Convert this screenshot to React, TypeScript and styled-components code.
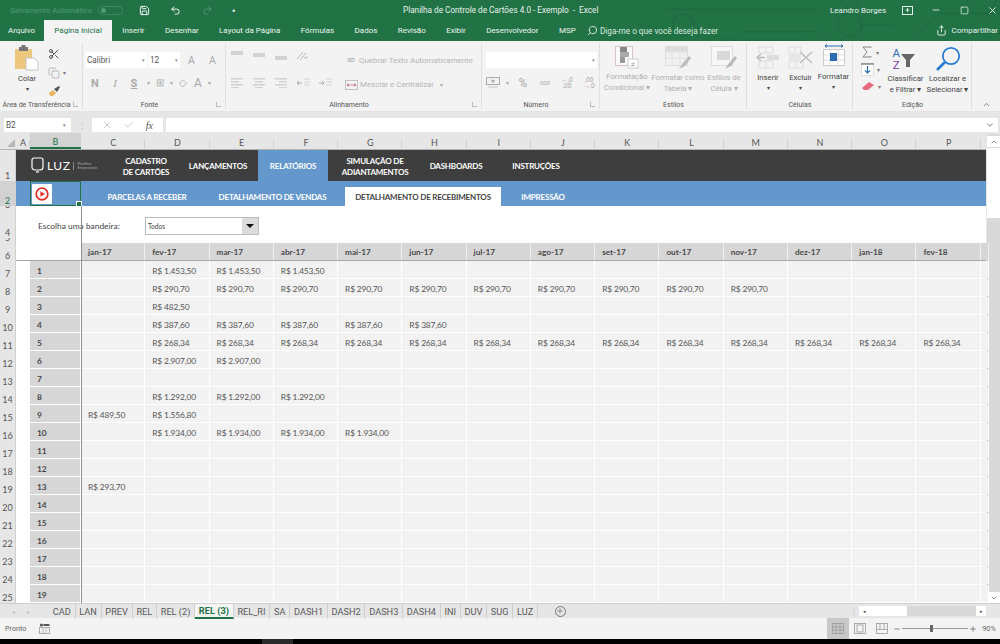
import React from "react";
import styled, { createGlobalStyle } from "styled-components";
import { Scissors, Save, Undo2, Redo2, Search, Share, ChevronDown, ChevronUp, X, Check, Minus, Plus, Square, Copy } from "lucide-react";

const Global = createGlobalStyle`
  html, body { margin: 0; padding: 0; background: #000; }
  * { box-sizing: border-box; }
`;

const Page = styled.div`
  width: 1000px; height: 644px; overflow: hidden; display: flex; flex-direction: column;
  font-family: Roboto, "Liberation Sans", sans-serif; background: #f3f3f3; color: #444;
`;

/* ---------- green header ---------- */
const GreenHeader = styled.header`
  position: relative; height: 41px; flex: none; background: #217346; color: #fff; font-size: 8px;
`;
const Circuit = styled.svg`
  position: absolute; right: 0; top: 0; width: 340px; height: 41px; pointer-events: none;
`;
const TitleBar = styled.div`
  position: relative; height: 20px; display: flex; align-items: center; padding-left: 10px;
`;
const AutoSave = styled.span`
  width: 85px; color: #4f9c73; font-size: 7.7px; white-space: nowrap;
`;
const Toggle = styled.span`
  width: 25px; height: 9px; margin-left: 3px; border: 1px solid #3d8a62; border-radius: 5px; display: flex; align-items: center; padding-left: 2px;
  &::before { content: ""; width: 5px; height: 5px; border-radius: 50%; background: #4f9c73; }
`;
const QuickBtn = styled.span<{ $w: number; $dim?: boolean }>`
  width: ${p => p.$w}px; display: flex; justify-content: center; align-items: center; color: ${p => (p.$dim ? "#4f9c73" : "#fff")};
`;
const DocTitle = styled.span`
  position: absolute; left: 403px; top: 5px; font-size: 8.2px; color: #e6f0ea; white-space: pre;
`;
const TitleRight = styled.div`
  margin-left: auto; margin-right: -7px; display: flex; align-items: center; color: #e6f0ea;
`;
const UserName = styled.span`
  width: 63px; font-size: 8px; white-space: nowrap;
`;
const WinBtn = styled.span`
  width: 28.5px; display: flex; justify-content: center; align-items: center;
`;
const TabsRow = styled.nav`
  position: relative; height: 21px; display: flex; align-items: flex-end; padding-left: 8px;
`;
const RibbonTab = styled.span<{ $on?: boolean }>`
  height: 21px; display: flex; align-items: center; white-space: nowrap; font-size: 8px; padding: 0 10.2px;
  color: ${p => (p.$on ? "#217346" : "#edf4f0")}; background: ${p => (p.$on ? "#f3f3f3" : "transparent")};
`;
const FirstTab = styled(RibbonTab)`
  padding: 0; margin-right: 9px;
`;
const TellMe = styled.span`
  margin-left: 1px; height: 21px; display: flex; align-items: center; gap: 2px; color: #d9e8df; font-size: 8.2px; white-space: nowrap;
  svg { transform: scaleX(-1); }
`;
const ShareBtn = styled.span`
  position: absolute; right: 2px; top: 0; height: 21px; display: flex; align-items: center; gap: 4px; color: #e6f0ea; font-size: 8px;
`;

/* ---------- ribbon ---------- */
const Ribbon = styled.section`
  height: 71px; flex: none; display: flex; background: #f3f3f3; border-bottom: 1px solid #e4e4e4;
`;
const Group = styled.div<{ $w: number }>`
  width: ${p => p.$w}px; flex: none; display: flex; flex-direction: column; position: relative;
  &::after { content: ""; position: absolute; right: 0; top: 2px; bottom: 2px; width: 1px; background: #e0e0e0; }
`;
const GroupBody = styled.div<{ $pl?: number }>`
  flex: 1; display: flex; padding-left: ${p => p.$pl ?? 0}px; min-height: 0;
`;
const GroupLabel = styled.div<{ $launcher?: boolean }>`
  height: 12px; flex: none; font-size: 7px; line-height: 13px; color: #555; text-align: center; white-space: nowrap; position: relative;
  padding-right: ${p => (p.$launcher ? 10 : 0)}px;
`;
const Launcher = styled.span`
  position: absolute; right: 5px; top: 3px; width: 5px; height: 5px; border-left: 1px solid #bbb; border-bottom: 1px solid #bbb;
`;
const BigBtn = styled.div<{ $w: number; $dim?: boolean; $mt?: number }>`
  width: ${p => p.$w}px; flex: none; display: flex; flex-direction: column; align-items: center; padding-top: ${p => p.$mt ?? 5}px;
  font-size: 7.7px; line-height: 11px; color: ${p => (p.$dim ? "#b0b0b0" : "#444")}; text-align: center; white-space: nowrap;
  svg { flex: none; margin-bottom: 2px; }
`;
const SortIcon = styled.div`
  width: 30px; height: 25px; margin-bottom: 2px; flex: none; display: flex; align-items: center; gap: 1px; padding-left: 2px;
  svg { margin: 4px 0 0 0; }
`;
const SortLetters = styled.div`
  display: flex; flex-direction: column; font-size: 11.5px; line-height: 12px; text-align: center;
`;
const SortA = styled.span`
  color: #2b6cb0;
`;
const SortZ = styled.span`
  color: #7b3fa8;
`;
const Caret = styled.span`
  font-size: 6px; line-height: 10px; color: inherit;
`;
const SmallCol = styled.div`
  width: 26px; margin-left: 7px; display: flex; flex-direction: column; align-items: flex-start; gap: 3px; padding-top: 5px; color: #666;
`;
const SmallIcon = styled.div`
  height: 16px; display: flex; align-items: center; gap: 3px; font-size: 6px; color: #777;
`;
const FontCol = styled.div`
  display: flex; flex-direction: column; padding: 11px 0 0 2px;
`;
const FontRow = styled.div`
  display: flex; align-items: center; height: 16px;
`;
const FontTools = styled(FontRow)`
  margin-top: 7px;
`;
const Combo = styled.div<{ $w: number }>`
  width: ${p => p.$w}px; height: 16px; background: #fff; margin-right: 1px; display: flex; align-items: center; padding: 0 2px; font-size: 8.2px; color: #555;
  span:last-child { margin-left: auto; font-size: 5px; color: #888; }
`;
const GrowA = styled.span`
  width: 21px; text-align: center; font-size: 10.5px; color: #aaa; position: relative;
`;
const Dimmed = styled.span<{ $w: number; $fs?: number; $b?: boolean; $i?: boolean; $u?: boolean; $serif?: boolean }>`
  width: ${p => p.$w}px; flex: none; text-align: center; color: #aaa; font-size: ${p => p.$fs ?? 11}px; line-height: 1;
  font-weight: ${p => (p.$b ? 700 : 400)}; font-style: ${p => (p.$i ? "italic" : "normal")}; text-decoration: ${p => (p.$u ? "underline" : "none")};
  font-family: ${p => (p.$serif ? '"Liberation Serif", serif' : "inherit")};
`;
const AlignGrid = styled.div`
  width: 119px; display: grid; grid-template-columns: repeat(5, 22px); grid-template-rows: 28px 28px; align-items: center; justify-items: center; flex: none;
`;
const AlignText = styled.div`
  display: flex; flex-direction: column; padding-top: 11px; gap: 7px;
`;
const AlignLine = styled.div`
  display: flex; align-items: center; gap: 2px; height: 17px; color: #b4b4b4; font-size: 7.9px; white-space: nowrap;
`;
const NumRow = styled.div`
  display: flex; align-items: center; height: 16px; margin-top: 7px; color: #aaa;
`;
const NumCol = styled.div`
  display: flex; flex-direction: column; padding: 11px 0 0 4px;
`;
const SumCol = styled.div`
  width: 32px; flex: none; display: flex; flex-direction: column; padding: 3px 0 0 8px; gap: 1px; font-size: 6px; color: #777;
`;
const CollapseCell = styled.div`
  flex: 1; display: flex; align-items: flex-end; justify-content: center; padding-bottom: 2px; color: #666;
`;

/* ---------- formula bar ---------- */
const FormulaBar = styled.div`
  height: 21px; flex: none; background: #e6e6e6; display: flex; align-items: center; padding: 5px 2px 0 4px;
`;
const NameBox = styled.div`
  width: 67px; height: 14px; background: #fff; font-size: 8.2px; color: #555; padding: 0 2px; display: flex; align-items: center; justify-content: space-between;
  span:last-child { font-size: 5px; color: #777; margin-right: 3px; }
`;
const Grip = styled.div`
  width: 21px; display: flex; justify-content: center; color: #bbb; font-size: 8px;
`;
const FxBox = styled.div`
  width: 71px; height: 14px; background: #fff; display: flex; align-items: center; justify-content: space-around; padding: 0 4px; color: #bbb; margin-right: 3px;
`;
const Fx = styled.span`
  font-family: "Liberation Serif", serif; font-style: italic; font-size: 10px; color: #555;
`;
const FormulaInput = styled.div`
  flex: 1; height: 14px; background: #fff; display: flex; align-items: center; justify-content: flex-end; padding-right: 3px; color: #666;
`;

/* ---------- sheet ---------- */
const ColHeaderRow = styled.div`
  height: 17px; flex: none; display: flex; background: #e6e6e6; font-family: Lato, sans-serif; font-size: 9px; color: #555; border-bottom: 1px solid #b5b5b5;
`;
const Corner = styled.div`
  width: 16px; flex: none; display: flex; align-items: flex-end; justify-content: flex-end; padding: 0 1px 2px 0;
  &::before { content: ""; width: 0; height: 0; border-style: solid; border-width: 0 0 8px 8px; border-color: transparent transparent #b8b8b8 transparent; }
`;
const ColLabel = styled.div<{ $w: number; $on?: boolean }>`
  width: ${p => p.$w}px; flex: none; display: flex; align-items: center; justify-content: center; padding-top: 2px; position: relative;
  background: ${p => (p.$on ? "#d2d2d2" : "transparent")}; color: ${p => (p.$on ? "#217346" : "#555")};
  border-bottom: ${p => (p.$on ? "2px solid #217346" : "none")};
  &::after { content: ""; position: absolute; right: 0; bottom: 1px; height: 8px; width: 1px; background: #cfcfcf; }
`;
const SheetArea = styled.div`
  height: 453px; flex: none; display: flex; background: #fff;
`;
const RowHeaders = styled.div`
  width: 16px; flex: none; background: #e6e6e6; display: flex; flex-direction: column; border-right: 1px solid #d0d0d0;
`;
const RowNum = styled.div<{ $h: number; $on?: boolean }>`
  height: ${p => p.$h}px; overflow: hidden; display: flex; align-items: flex-end; justify-content: center; flex: none;
  font-family: Lato, sans-serif; font-size: 9px; line-height: 11px; color: ${p => (p.$on ? "#217346" : "#555")};
  background: ${p => (p.$on ? "#d2d2d2" : "transparent")};
`;
const Content = styled.div`
  width: 970px; flex: none; position: relative; display: flex; flex-direction: column; font-family: Lato, sans-serif;
`;
const MainNav = styled.div`
  height: 31px; flex: none; background: #3e3e3e; display: flex; color: #fff; font-weight: 700; font-size: 8px; letter-spacing: -.2px; line-height: 11px; text-align: center;
`;
const Logo = styled.div`
  width: 92px; flex: none; display: flex; align-items: center; padding-left: 15px; font-weight: 400; letter-spacing: 0;
`;
const LogoWord = styled.span`
  font-size: 12px; letter-spacing: .5px; margin-left: 3px; font-weight: 400;
`;
const LogoTag = styled.span`
  font-size: 3.6px; line-height: 4px; color: #aaa; margin-left: 3px; padding-left: 3px; border-left: 1px solid #888; text-align: left;
`;
const NavItem = styled.div<{ $w: number; $on?: boolean; $ml?: number }>`
  width: ${p => p.$w}px; flex: none; display: flex; align-items: center; justify-content: center; padding-top: 2px; margin-left: ${p => p.$ml ?? 0}px; white-space: nowrap;
  background: ${p => (p.$on ? "#6497cb" : "transparent")};
`;
const SubNav = styled.div`
  height: 25px; flex: none; background: #6497cb; display: flex; padding-left: 65px; color: #fff; font-weight: 700; font-size: 8px; letter-spacing: -.2px;
`;
const SubItem = styled.div<{ $w: number }>`
  width: ${p => p.$w}px; flex: none; display: flex; align-items: center; justify-content: center; padding-top: 6px; white-space: nowrap;
`;
const SubActive = styled.div`
  width: 156px; margin: 6px 0 0 13px; flex: none; background: #fff; color: #444; display: flex; align-items: center; justify-content: center; white-space: nowrap;
`;
const Selection = styled.div`
  position: absolute; left: 14px; top: 31px; width: 51px; height: 25px; border: 1px solid #217346; display: flex; align-items: center; padding-left: 1px;
  &::after { content: ""; position: absolute; right: -2px; bottom: -2px; width: 4px; height: 4px; background: #217346; border: 1px solid #fff; }
`;
const PlayBtn = styled.div`
  width: 20px; height: 20px; background: #fff; border-radius: 1px; display: flex; align-items: center; justify-content: center;
`;
const FilterRow = styled.div`
  height: 37px; flex: none; display: flex; align-items: center; padding: 2px 0 0 22px; font-size: 8.4px; color: #444;
`;
const FilterLabel = styled.span`
  width: 107px; flex: none; white-space: nowrap;
`;
const Select = styled.div`
  width: 114px; height: 18px; border: 1px solid #bbb; background: #fff; display: flex; align-items: center; padding-left: 2px; font-size: 6.6px; color: #444;
`;
const SelectArrow = styled.span`
  margin-left: auto; width: 16px; height: 16px; background: #dcdcdc; display: flex; align-items: center; justify-content: center;
  &::before { content: ""; border-style: solid; border-width: 4px 4.5px 0 4.5px; border-color: #111 transparent transparent transparent; }
`;
const columns = "14px 51px repeat(14, 64.28px) 1fr";
const MonthRow = styled.div`
  height: 18px; flex: none; display: grid; grid-template-columns: ${columns}; border-bottom: 1px solid #a8a8a8;
`;
const MonthCell = styled.div<{ $blank?: boolean }>`
  background: ${p => (p.$blank ? "#fff" : "#d6d6d6")}; border-right: 1px solid ${p => (p.$blank ? "#fff" : "#efefef")}; padding: 1px 0 0 7px; display: flex; align-items: center;
  font-size: 8.2px; font-weight: 700; color: #4a4a4a; white-space: nowrap;
`;
const DataRow = styled.div`
  height: 18px; flex: none; display: grid; grid-template-columns: ${columns}; border-bottom: 1px solid #fff;
`;
const Cell = styled.div`
  background: #f2f2f2; border-right: 1px solid #fff; padding: 2px 0 0 7px; display: flex; align-items: center; font-size: 8.4px; letter-spacing: -.15px; color: #555; white-space: nowrap;
`;
const ColACell = styled.div`
  background: #fff;
`;
const IdCell = styled(Cell)`
  background: #d6d6d6; font-weight: 700; color: #4a4a4a; letter-spacing: 0;
`;
const FreezeLine = styled.div`
  position: absolute; left: 64.5px; top: 56px; bottom: 0; width: 1px; background: #8f8f8f;
`;
const VScroll = styled.div`
  width: 14px; flex: none; background: #d9d9d9; display: flex; flex-direction: column; margin-top: -16px; border-left: 1px solid #e6e6e6; height: 469px;
`;
const VBtn = styled.div`
  height: 11px; margin-top: 2px; background: #fff; display: flex; align-items: center; justify-content: center; color: #555; flex: none;
`;
const VThumb = styled.div`
  height: 70px; background: #fff; margin-top: 1px; flex: none;
`;
const VFill = styled.div`
  flex: 1;
`;

/* ---------- sheet tabs + status ---------- */
const TabBar = styled.div`
  height: 15px; flex: none; background: #e6e6e6; display: flex; align-items: center; border-top: 1px solid #d0d0d0; position: relative; z-index: 1;
`;
const TabArrows = styled.div`
  width: 49px; flex: none; display: flex; gap: 12px; padding-left: 12px; font-size: 6px; color: #c4c4c4;
`;
const SheetTab = styled.div<{ $on?: boolean }>`
  height: 15px; padding: 0 3.75px; flex: none; display: flex; align-items: center; font-size: 9.2px; white-space: nowrap;
  color: ${p => (p.$on ? "#217346" : "#5a5a5a")}; font-weight: ${p => (p.$on ? 700 : 400)};
  background: ${p => (p.$on ? "#f5f5f5" : "transparent")}; border-right: 1px solid #cfcfcf;
  border-bottom: ${p => (p.$on ? "2px solid #217346" : "none")};
`;
const AddSheet = styled.div`
  width: 11px; height: 11px; margin-left: 17px; flex: none; border: 1px solid #777; border-radius: 50%; display: flex; align-items: center; justify-content: center; color: #666;
`;
const HScroll = styled.div`
  position: absolute; left: 850px; top: 1px; width: 136px; height: 12px; display: flex; align-items: center;
`;
const HGrip = styled.span`
  width: 9px; color: #aaa; font-size: 8px; flex: none;
`;
const HBtn = styled.span`
  width: 10px; height: 10px; background: #fff; flex: none; font-size: 5px; color: #444; display: flex; align-items: center; justify-content: center;
`;
const HThumb = styled.span`
  width: 38px; height: 10px; background: #fff; flex: none;
`;
const HTrack = styled.span`
  width: 69px; height: 10px; background: #d9d9d9; flex: none;
`;
const StatusBar = styled.footer`
  height: 21px; flex: none; background: #f3f3f3; display: flex; align-items: center; font-size: 7.2px; color: #666; padding-left: 5px;
`;
const StatusGap = styled.span`
  width: 13px;
`;
const StatusRight = styled.div`
  margin-left: auto; height: 21px; display: flex; align-items: center; color: #888; gap: 1px;
`;
const ViewBtn = styled.div<{ $on?: boolean }>`
  width: 22px; height: 21px; margin-right: -1px; display: flex; align-items: center; justify-content: center; background: ${p => (p.$on ? "#c8c8c8" : "transparent")};
`;
const Zoomer = styled.div`
  width: 66px; height: 1px; background: #999; position: relative; flex: none;
  &::after { content: ""; position: absolute; left: 28px; top: -3px; width: 3px; height: 7px; background: #666; }
`;
const ZoomValue = styled.span`
  width: 22px; text-align: center; font-size: 7.4px; color: #666;
`;
const BlackBar = styled.div`
  flex: 1; background: #000; padding-left: 262px;
  &::before { content: ""; display: block; width: 31px; height: 100%; background: #2a2a2a; }
`;

/* ---------- icons ---------- */
const Clipboard = () => (
  <svg width="26" height="26" viewBox="0 0 26 26">
    <rect x="1" y="4" width="17" height="20" fill="#eec77f" />
    <rect x="5" y="2" width="9" height="4" fill="#777" />
    <rect x="7.5" y="0" width="4" height="3" fill="#777" />
    <path d="M12 13h8l4 4v8H12z" fill="#fff" stroke="#c4c4c4" />
  </svg>
);
const Brush = () => (
  <svg width="13" height="12" viewBox="0 0 13 12">
    <path d="M1 8l4-3 3 3-3 3H2z" fill="#e8b860" />
    <path d="M6 4l5-3 1 1-3 5z" fill="#555" />
  </svg>
);
const Bars = ({ kind }: { kind: string }) => {
  const c = "#d2d2d2";
  if (kind === "top" || kind === "mid" || kind === "bot") {
    const y = kind === "top" ? 1 : kind === "mid" ? 3 : 6;
    return (<svg width="14" height="11" viewBox="0 0 14 11"><rect x="1" y={y} width="12" height="4" fill={c} /></svg>);
  }
  const x = (w: number) => (kind === "left" ? 1 : kind === "center" ? (14 - w) / 2 : 13 - w);
  return (
    <svg width="14" height="10" viewBox="0 0 14 10">
      <rect x={x(12)} y="0" width="12" height="1.5" fill={c} />
      <rect x={x(8)} y="3" width="8" height="1.5" fill={c} />
      <rect x={x(12)} y="6" width="12" height="1.5" fill={c} />
      <rect x={x(8)} y="9" width="8" height="1" fill={c} />
    </svg>
  );
};
const Indent = ({ dir }: { dir: number }) => (
  <svg width="14" height="10" viewBox="0 0 14 10" fill="none" stroke="#bbb">
    <path d="M8 1h6M8 4h6M8 7h6" stroke="#d5d5d5" />
    <path d={dir < 0 ? "M6 5H1M3 3L1 5l2 2" : "M1 5h5M4 3l2 2-2 2"} stroke="#aaa" />
  </svg>
);
const Orient = () => (
  <svg width="16" height="11" viewBox="0 0 16 11" fill="none" stroke="#bbb"><path d="M2 9l6-7M5 10l6-7M9 8l4-1" /></svg>
);
const Merge = () => (
  <svg width="13" height="12" viewBox="0 0 13 12" fill="none"><rect x=".5" y="1.5" width="12" height="9" stroke="#c0c0c0" /><path d="M2 6h9M4 4.5L2 6l2 1.5M9 4.5L11 6 9 7.5" stroke="#a45" strokeWidth=".6" /></svg>
);
const Money = () => (
  <svg width="16" height="12" viewBox="0 0 16 12"><rect x=".5" y=".5" width="13" height="7" fill="none" stroke="#aaa" /><circle cx="7" cy="4" r="1.6" fill="#aaa" /><rect x="2" y="9" width="10" height="2" fill="#ddd" /></svg>
);
const CondFmt = () => (
  <svg width="24" height="23" viewBox="0 0 24 23">
    <rect x=".5" y=".5" width="17" height="19" fill="#fafafa" stroke="#d6c5c5" />
    <rect x="5" y="1" width="7" height="5" fill="#888" /><rect x="5" y="6" width="9" height="5" fill="#aaa" /><rect x="5" y="11" width="5" height="6" fill="#999" />
    <rect x="13" y="13" width="10" height="9" fill="#fff" stroke="#ccc" />
    <text x="15.5" y="21" fontSize="8" fill="#999">≠</text>
  </svg>
);
const TableFmt = () => (
  <svg width="27" height="24" viewBox="0 0 27 24">
    <rect x=".5" y=".5" width="22" height="19" fill="#f0f0f0" stroke="#ddd" />
    <rect x="1" y="1" width="21" height="5" fill="#dcdcdc" />
    <path d="M7 1v18M15 1v18M1 6h21M1 12h21" stroke="#e2e2e2" />
    <path d="M14 23l4-6 6-7 2 2-6 8z" fill="#bbb" />
  </svg>
);
const CellStyle = () => (
  <svg width="27" height="24" viewBox="0 0 27 24">
    <rect x=".5" y=".5" width="21" height="19" fill="#f7f7f7" stroke="#ddd" />
    <rect x="6" y="5" width="13" height="9" fill="#d8d8d8" />
    <path d="M14 23l4-6 6-7 2 2-6 8z" fill="#bbb" />
  </svg>
);
const InsertIcon = () => (
  <svg width="26" height="24" viewBox="0 0 26 24" fill="none">
    <path d="M4 1h14v6H4zM4 15h14v7H4zM11 1v6M11 15v7" stroke="#ddd" />
    <path d="M12 9h12v5H12z" fill="#ddd" />
    <path d="M10 11.5H2M6 8l-4 3.5L6 15" stroke="#bbb" strokeWidth="1.4" />
  </svg>
);
const DeleteIcon = () => (
  <svg width="27" height="24" viewBox="0 0 27 24" fill="none">
    <path d="M2 1h12v7H2zM2 15h14v7H2zM8 1v7M9 15v7" stroke="#ddd" />
    <path d="M2 8.5h12v6H2z" fill="#e6e6e6" />
    <path d="M13 6l12 11M25 6L13 17" stroke="#bbb" strokeWidth="1.2" />
  </svg>
);
const FormatIcon = () => (
  <svg width="24" height="25" viewBox="0 0 24 25" fill="none">
    <path d="M3 2h18M3 2l2-1.5M3 2l2 1.5M21 2l-2-1.5M21 2l-2 1.5" stroke="#2b6cb0" />
    <rect x="1.5" y="5.5" width="21" height="16" fill="#fff" stroke="#ccc" />
    <path d="M8 6v15M16 6v15M2 11h20M2 16h20" stroke="#ddd" />
    <rect x="8" y="9" width="7" height="8" fill="#2b6cb0" />
  </svg>
);
const Sigma = () => (
  <svg width="12" height="12" viewBox="0 0 12 12" fill="none"><path d="M10 2V1H2l4 5-4 5h8v-1" stroke="#888" /></svg>
);
const FillDown = () => (
  <svg width="13" height="13" viewBox="0 0 13 13" fill="none"><rect x=".5" y=".5" width="12" height="12" fill="#fff" stroke="#ddd" /><path d="M0 1h13" stroke="#555" /><path d="M6.5 3v7M4 7.5l2.5 2.5L9 7.5" stroke="#2b6cb0" strokeWidth="1.2" /></svg>
);
const Eraser = () => (
  <svg width="14" height="10" viewBox="0 0 14 10"><path d="M1 7l7-6 5 3-6 5H3z" fill="#e86a80" /></svg>
);
const Funnel = () => (
  <svg width="15" height="14" viewBox="0 0 15 14"><path d="M0 0h14l-5 6v7H5V6z" fill="#666" /></svg>
);
const BigLens = () => (
  <svg width="26" height="25" viewBox="0 0 26 25" fill="none">
    <circle cx="16" cy="10" r="8.2" stroke="#2b7cd3" strokeWidth="1.8" />
    <path d="M10 16L2 24" stroke="#2b7cd3" strokeWidth="2.6" />
  </svg>
);
const Play = () => (
  <svg width="14" height="14" viewBox="0 0 14 14" fill="none"><circle cx="7" cy="7" r="5.8" stroke="#e4312b" strokeWidth="1.8" /><path d="M5.4 4.2L10 7l-4.6 2.8z" fill="#e4312b" /></svg>
);
const Bulb = () => (
  <svg width="13" height="17" viewBox="0 0 13 17" fill="none" stroke="#fff" strokeWidth="1.2"><path d="M3 1h7a2 2 0 012 2v7a3 3 0 01-3 3H4a3 3 0 01-3-3V3a2 2 0 012-2z" /><path d="M5 15h3" /></svg>
);
const PresentIcon = () => (
  <svg width="11" height="9" viewBox="0 0 11 9" fill="none" stroke="#e6f0ea"><rect x=".5" y=".5" width="10" height="8" /><path d="M5.5 2v4M3.5 4h4" /></svg>
);
const GridView = ({ kind }: { kind: number }) => (
  <svg width="12" height="11" viewBox="0 0 12 11" fill="none" stroke="#9a9a9a" strokeWidth=".8">
    <rect x=".5" y=".5" width="11" height="10" />
    {kind === 0 && <path d="M4 .5v10M8 .5v10M.5 4h11M.5 7h11" />}
    {kind === 1 && <rect x="3" y="2" width="6" height="7" />}
    {kind === 2 && <path d="M4 .5v6M8 .5v6M.5 6.5h11" />}
  </svg>
);
const Macro = () => (
  <svg width="11" height="11" viewBox="0 0 11 11" fill="none"><circle cx="2.5" cy="2" r="1.6" fill="#555" /><rect x="4.5" y="1" width="6" height="2" fill="#555" /><rect x=".5" y="4.5" width="10" height="6" stroke="#aaa" /><path d="M4 4.5v6M7 4.5v6" stroke="#bbb" /></svg>
);

/* ---------- data ---------- */
const months = ["jan-17","fev-17","mar-17","abr-17","mai-17","jun-17","jul-17","ago-17","set-17","out-17","nov-17","dez-17","jan-18","fev-18"];
const rep = (v: string, n: number, start = 1) => {
  const a: string[] = Array(14).fill("");
  for (let i = start; i < start + n; i++) a[i] = v;
  return a;
};
const rows: string[][] = [
  rep("R$ 1.453,50", 3),
  rep("R$ 290,70", 10),
  rep("R$ 482,50", 1),
  rep("R$ 387,60", 5),
  rep("R$ 268,34", 13),
  rep("R$ 2.907,00", 2),
  rep("", 0),
  rep("R$ 1.292,00", 3),
  ["R$ 489,50", "R$ 1.556,80", ...Array(12).fill("")],
  rep("R$ 1.934,00", 4),
  rep("", 0),
  rep("", 0),
  ["R$ 293,70", ...Array(13).fill("")],
  ...Array.from({ length: 6 }, () => rep("", 0)),
];
const colLabels = "CDEFGHIJKLMNOP".split("");
const sheetTabs = ["CAD","LAN","PREV","REL","REL (2)","REL (3)","REL_RI","SA","DASH1","DASH2","DASH3","DASH4","INI","DUV","SUG","LUZ"];
const topHeights = [31, 25, 4, 28, 5, 18];

export default function App() {
  return (
    <Page>
      <Global />
      <GreenHeader>
        <Circuit viewBox="0 0 1020 123" fill="none" stroke="#1b6a3e" strokeWidth="3">
          <path d="M20 28H470M30 28l-10 0" />
          <circle cx="70" cy="75" r="32" />
          <path d="M250 95H470l30 28M180 120h250" />
          <circle cx="570" cy="75" r="36" />
          <path d="M540 0l30 40 30-40M600 75H700" />
          <path d="M770 100l70-60h180M900 100h120M970 60l40-60" />
        </Circuit>
        <TitleBar>
          <AutoSave>Salvamento Automático</AutoSave>
          <Toggle />
          <QuickBtn $w={42}><Save size={11} /></QuickBtn>
          <QuickBtn $w={21}><Undo2 size={11} /></QuickBtn>
          <QuickBtn $w={43} $dim><Redo2 size={11} /></QuickBtn>
          <QuickBtn $w={10}>▪</QuickBtn>
          <DocTitle>{"Planilha de Controle de Cartões 4.0 - Exemplo  -  Excel"}</DocTitle>
          <TitleRight>
            <UserName>Leandro Borges</UserName>
            <WinBtn><PresentIcon /></WinBtn>
            <WinBtn><Minus size={10} /></WinBtn>
            <WinBtn><Square size={9} /></WinBtn>
            <WinBtn><X size={11} /></WinBtn>
          </TitleRight>
        </TitleBar>
        <TabsRow>
          <FirstTab>Arquivo</FirstTab>
          <RibbonTab $on>Página Inicial</RibbonTab>
          {["Inserir","Desenhar","Layout da Página","Fórmulas","Dados","Revisão","Exibir","Desenvolvedor","MSP"].map(t => (
            <RibbonTab key={t}>{t}</RibbonTab>
          ))}
          <TellMe><Search size={11} />Diga-me o que você deseja fazer</TellMe>
          <ShareBtn><Share size={11} />Compartilhar</ShareBtn>
        </TabsRow>
      </GreenHeader>

      <Ribbon>
        <Group $w={83}>
          <GroupBody $pl={13}>
            <BigBtn $w={28} $mt={4}><Clipboard />Colar<Caret>▾</Caret></BigBtn>
            <SmallCol>
              <SmallIcon><Scissors size={12} color="#555" /></SmallIcon>
              <SmallIcon><Copy size={12} color="#bbb" />▾</SmallIcon>
              <SmallIcon><Brush /></SmallIcon>
            </SmallCol>
          </GroupBody>
          <GroupLabel $launcher>Área de Transferência<Launcher /></GroupLabel>
        </Group>
        <Group $w={143}>
          <GroupBody>
            <FontCol>
              <FontRow>
                <Combo $w={62}><span>Calibri</span><span>▾</span></Combo>
                <Combo $w={32}><span>12</span><span>▾</span></Combo>
                <GrowA>A</GrowA>
                <GrowA>A</GrowA>
              </FontRow>
              <FontTools>
                <Dimmed $w={20} $b>N</Dimmed>
                <Dimmed $w={20} $i $serif>I</Dimmed>
                <Dimmed $w={18} $u $b>S</Dimmed>
                <Dimmed $w={10} $fs={6}>▾</Dimmed>
                <Dimmed $w={14} $fs={10}>⊞</Dimmed>
                <Dimmed $w={8} $fs={6}>▾</Dimmed>
                <Dimmed $w={16} $fs={10}>◇</Dimmed>
                <Dimmed $w={14} $fs={12}>A</Dimmed>
                <Dimmed $w={8} $fs={6}>▾</Dimmed>
              </FontTools>
            </FontCol>
          </GroupBody>
          <GroupLabel $launcher>Fonte<Launcher /></GroupLabel>
        </Group>
        <Group $w={256}>
          <GroupBody>
            <AlignGrid>
              <Bars kind="top" /><Bars kind="mid" /><Bars kind="bot" /><Orient /><span />
              <Bars kind="left" /><Bars kind="center" /><Bars kind="right" /><Indent dir={-1} /><Indent dir={1} />
            </AlignGrid>
            <AlignText>
              <AlignLine><Dimmed $w={12} $fs={7}>ab</Dimmed>Quebrar Texto Automaticamente</AlignLine>
              <AlignLine><Merge />Mesclar e Centralizar <Dimmed $w={10} $fs={6}>▾</Dimmed></AlignLine>
            </AlignText>
          </GroupBody>
          <GroupLabel $launcher>Alinhamento<Launcher /></GroupLabel>
        </Group>
        <Group $w={118}>
          <GroupBody>
            <NumCol>
              <Combo $w={111}><span /><span>▾</span></Combo>
              <NumRow>
                <Money />
                <Dimmed $w={10} $fs={6}>▾</Dimmed>
                <Dimmed $w={22} $fs={12}>%</Dimmed>
                <Dimmed $w={22} $fs={6}>000</Dimmed>
                <Dimmed $w={22} $fs={6.5}>←,0<br />,00</Dimmed>
                <Dimmed $w={22} $fs={6.5}>,00<br />→,0</Dimmed>
              </NumRow>
            </NumCol>
          </GroupBody>
          <GroupLabel $launcher>Número<Launcher /></GroupLabel>
        </Group>
        <Group $w={147}>
          <GroupBody $pl={3}>
            <BigBtn $w={48} $dim><CondFmt />Formatação<span>Condicional ▾</span></BigBtn>
            <BigBtn $w={54} $dim><TableFmt />Formatar como<span>Tabela ▾</span></BigBtn>
            <BigBtn $w={38} $dim><CellStyle />Estilos de<span>Célula ▾</span></BigBtn>
          </GroupBody>
          <GroupLabel>Estilos</GroupLabel>
        </Group>
        <Group $w={106}>
          <GroupBody $pl={5}>
            <BigBtn $w={32}><InsertIcon />Inserir<Caret>▾</Caret></BigBtn>
            <BigBtn $w={33}><DeleteIcon />Excluir<Caret>▾</Caret></BigBtn>
            <BigBtn $w={33} $mt={3}><FormatIcon />Formatar<Caret>▾</Caret></BigBtn>
          </GroupBody>
          <GroupLabel>Células</GroupLabel>
        </Group>
        <Group $w={119}>
          <GroupBody>
            <SumCol>
              <SmallIcon><Sigma />▾</SmallIcon>
              <SmallIcon><FillDown />▾</SmallIcon>
              <SmallIcon><Eraser />▾</SmallIcon>
            </SumCol>
            <BigBtn $w={41}>
              <SortIcon>
                <SortLetters><SortA>A</SortA><SortZ>Z</SortZ></SortLetters>
                <Funnel />
              </SortIcon>
              Classificar<span>e Filtrar ▾</span>
            </BigBtn>
            <BigBtn $w={43}><BigLens />Localizar e<span>Selecionar ▾</span></BigBtn>
          </GroupBody>
          <GroupLabel>Edição</GroupLabel>
        </Group>
        <CollapseCell><ChevronUp size={9} /></CollapseCell>
      </Ribbon>

      <FormulaBar>
        <NameBox><span>B2</span><span>▾</span></NameBox>
        <Grip>⋮</Grip>
        <FxBox><X size={10} /><Check size={10} /><Fx>fx</Fx></FxBox>
        <FormulaInput><ChevronDown size={10} /></FormulaInput>
      </FormulaBar>

      <ColHeaderRow>
        <Corner />
        <ColLabel $w={14}>A</ColLabel>
        <ColLabel $w={51} $on>B</ColLabel>
        {colLabels.map(c => <ColLabel key={c} $w={64.28}>{c}</ColLabel>)}
      </ColHeaderRow>

      <SheetArea>
        <RowHeaders>
          {topHeights.map((h, i) => <RowNum key={i} $h={h} $on={i === 1}>{i + 1}</RowNum>)}
          {rows.map((_, i) => <RowNum key={i} $h={18}>{i + 7}</RowNum>)}
        </RowHeaders>
        <Content>
          <MainNav>
            <Logo><Bulb /><LogoWord>LUZ</LogoWord><LogoTag>Planilhas<br />Empresariais</LogoTag></Logo>
            <NavItem $w={76}>CADASTRO<br />DE CARTÕES</NavItem>
            <NavItem $w={68}>LANÇAMENTOS</NavItem>
            <NavItem $w={70} $on $ml={6}>RELATÓRIOS</NavItem>
            <NavItem $w={94}>SIMULAÇÃO DE<br />ADIANTAMENTOS</NavItem>
            <NavItem $w={68}>DASHBOARDS</NavItem>
            <NavItem $w={92}>INSTRUÇÕES</NavItem>
          </MainNav>
          <SubNav>
            <SubItem $w={132}>PARCELAS A RECEBER</SubItem>
            <SubItem $w={119}>DETALHAMENTO DE VENDAS</SubItem>
            <SubActive>DETALHAMENTO DE RECEBIMENTOS</SubActive>
            <SubItem $w={84}>IMPRESSÃO</SubItem>
          </SubNav>
          <FilterRow>
            <FilterLabel>Escolha uma bandeira:</FilterLabel>
            <Select>Todos<SelectArrow /></Select>
          </FilterRow>
          <MonthRow>
            <MonthCell $blank /><MonthCell $blank />
            {months.map(m => <MonthCell key={m}>{m}</MonthCell>)}
            <MonthCell />
          </MonthRow>
          {rows.map((r, i) => (
            <DataRow key={i}>
              <ColACell />
              <IdCell>{i + 1}</IdCell>
              {r.map((v, j) => <Cell key={j}>{v}</Cell>)}
              <Cell />
            </DataRow>
          ))}
          <Selection><PlayBtn><Play /></PlayBtn></Selection>
          <FreezeLine />
        </Content>
        <VScroll>
          <VBtn><ChevronUp size={8} /></VBtn>
          <VThumb />
          <VFill />
          <VBtn><ChevronDown size={8} /></VBtn>
        </VScroll>
      </SheetArea>

      <TabBar>
        <TabArrows><span>◂</span><span>▸</span></TabArrows>
        {sheetTabs.map(t => <SheetTab key={t} $on={t === "REL (3)"}>{t}</SheetTab>)}
        <AddSheet><Plus size={8} /></AddSheet>
        <HScroll>
          <HGrip>⋮</HGrip>
          <HBtn>◂</HBtn>
          <HThumb />
          <HTrack />
          <HBtn>▸</HBtn>
        </HScroll>
      </TabBar>

      <StatusBar>
        Pronto
        <StatusGap />
        <Macro />
        <StatusRight>
          <ViewBtn $on><GridView kind={0} /></ViewBtn>
          <ViewBtn><GridView kind={1} /></ViewBtn>
          <ViewBtn><GridView kind={2} /></ViewBtn>
          <Minus size={8} color="#555" />
          <Zoomer />
          <Plus size={8} color="#555" />
          <ZoomValue>90%</ZoomValue>
        </StatusRight>
      </StatusBar>
      <BlackBar />
    </Page>
  );
}
